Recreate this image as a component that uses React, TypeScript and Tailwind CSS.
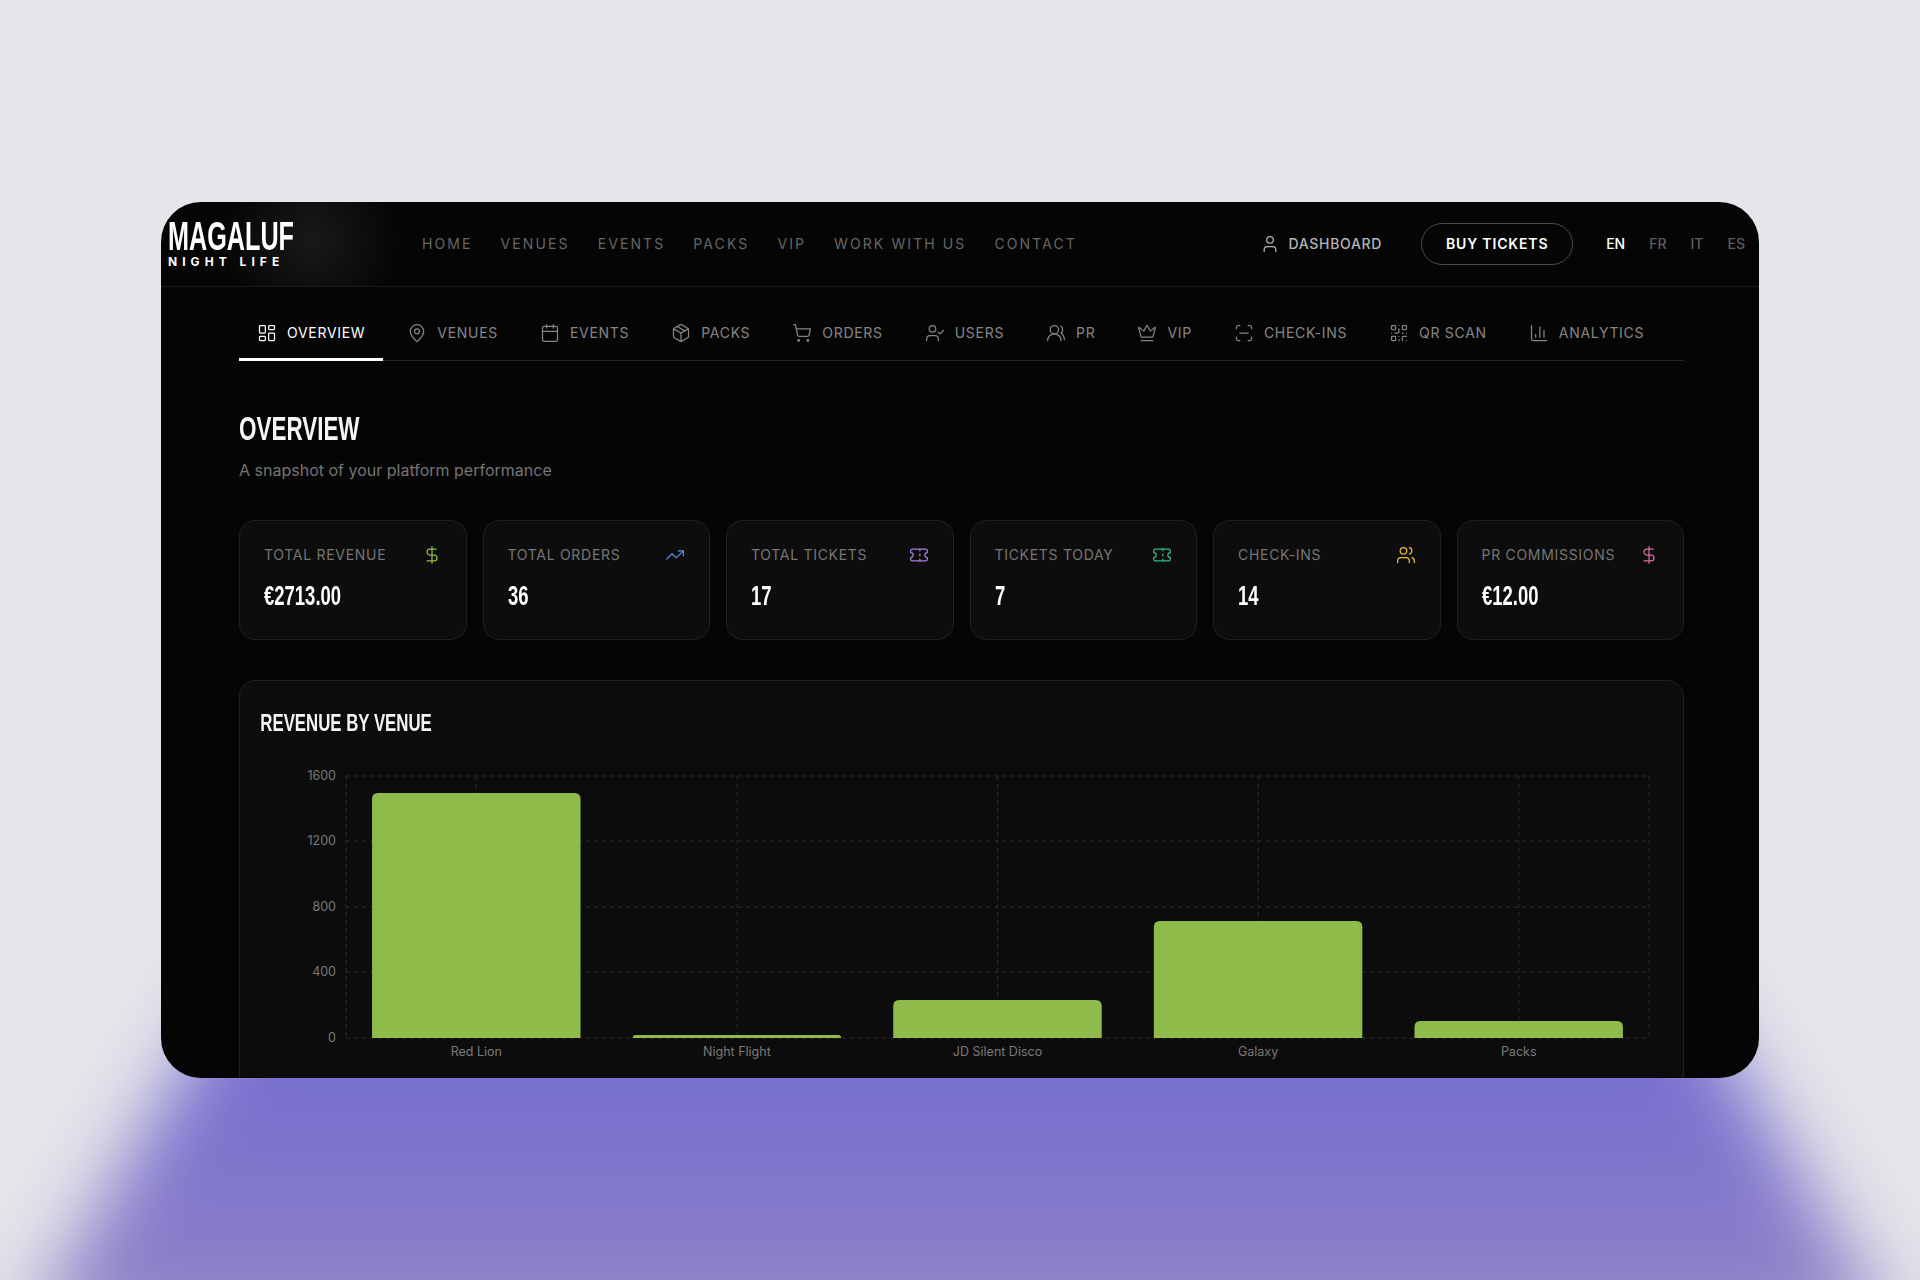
/**
 * Admin overview screen shown as a floating window
 */

import {
  BarChart3,
  Calendar,
  Crown,
  DollarSign,
  LayoutDashboard,
  MapPin,
  Package,
  QrCode,
  ScanLine,
  ShoppingCart,
  Ticket,
  TrendingUp,
  User,
  UserCheck,
  Users,
  UsersRound,
} from 'lucide-react';

const siteLinks = ['Home', 'Venues', 'Events', 'Packs', 'VIP', 'Work with us', 'Contact'];

const tabs = [
  { label: 'Overview', icon: LayoutDashboard, active: true },
  { label: 'Venues', icon: MapPin },
  { label: 'Events', icon: Calendar },
  { label: 'Packs', icon: Package },
  { label: 'Orders', icon: ShoppingCart },
  { label: 'Users', icon: UserCheck },
  { label: 'PR', icon: UsersRound },
  { label: 'VIP', icon: Crown },
  { label: 'Check-ins', icon: ScanLine },
  { label: 'QR Scan', icon: QrCode },
  { label: 'Analytics', icon: BarChart3 },
];

const stats = [
  { label: 'Total Revenue', value: '€2713.00', icon: DollarSign, color: 'text-[#8fbb4b]' },
  { label: 'Total Orders', value: '36', icon: TrendingUp, color: 'text-[#5b8fe6]' },
  { label: 'Total Tickets', value: '17', icon: Ticket, color: 'text-[#a27fe3]' },
  { label: 'Tickets Today', value: '7', icon: Ticket, color: 'text-[#35b98a]' },
  { label: 'Check-ins', value: '14', icon: Users, color: 'text-[#e6b93a]' },
  { label: 'PR Commissions', value: '€12.00', icon: DollarSign, color: 'text-[#d46ea5]' },
];

const venues = [
  { name: 'Red Lion', height: 245 },
  { name: 'Night Flight', height: 3 },
  { name: 'JD Silent Disco', height: 38 },
  { name: 'Galaxy', height: 117 },
  { name: 'Packs', height: 17 },
];

const ticks = [
  { label: '1600', y: 14 },
  { label: '1200', y: 79 },
  { label: '800', y: 145 },
  { label: '400', y: 210 },
  { label: '0', y: 276 },
];

const PLOT_LEFT = 106;
const PLOT_RIGHT = 1409;
const PLOT_BOTTOM = 276;
const BAND = (PLOT_RIGHT - PLOT_LEFT) / venues.length;
const BAR_WIDTH = BAND * 0.8;

function Logo() {
  return (
    <div className="w-[261px] h-full flex flex-col justify-center pl-[7px] bg-[radial-gradient(circle_at_150px_38px,#191919,transparent_90px)]">
      <span className="block origin-left scale-x-[0.63] font-['Liberation_Sans',sans-serif] font-bold text-[40px] leading-[32px] text-white whitespace-nowrap">
        MAGALUF
      </span>
      <span className="block mt-[4px] font-['Inter',sans-serif] font-bold text-[12px] leading-[12px] tracking-[0.42em] text-white whitespace-nowrap">
        NIGHT LIFE
      </span>
    </div>
  );
}

function Header() {
  return (
    <header className="h-[85px] flex items-center pr-[14px] border-b border-[#1a1a1a]">
      <Logo />
      <nav className="flex items-center gap-7">
        {siteLinks.map((link) => (
          <a key={link} className="text-sm uppercase tracking-[0.15em] text-[#666666] whitespace-nowrap">
            {link}
          </a>
        ))}
      </nav>
      <div className="ml-auto flex items-center">
        <a className="flex items-center gap-2 text-sm font-medium uppercase tracking-[0.05em] text-[#b5b5b5]">
          <User size={20} strokeWidth={1.5} />
          Dashboard
        </a>
        <button className="ml-[39px] h-[42px] w-[152px] rounded-full border border-[#4a4a4a] text-sm font-semibold uppercase tracking-[0.06em] text-white">
          Buy Tickets
        </button>
        <div className="ml-[33px] flex items-center gap-[24px] text-sm font-medium">
          <span className="text-white">EN</span>
          <span className="text-[#5c5c5c]">FR</span>
          <span className="text-[#5c5c5c]">IT</span>
          <span className="text-[#5c5c5c]">ES</span>
        </div>
      </div>
    </header>
  );
}

function Tabs() {
  return (
    <div className="mt-[21px] flex gap-1.5 border-b border-[#262626]">
      {tabs.map(({ label, icon: Icon, active }) => (
        <a
          key={label}
          className={`-mb-px flex items-center gap-2.5 px-[18px] h-[53px] border-b-[3px] text-sm uppercase tracking-[0.05em] whitespace-nowrap ${
            active ? 'border-white text-white' : 'border-transparent text-[#858585]'
          }`}
        >
          <Icon size={20} strokeWidth={1.5} />
          {label}
        </a>
      ))}
    </div>
  );
}

function StatCard({ label, value, icon: Icon, color }: (typeof stats)[number]) {
  return (
    <div className="h-[120px] rounded-2xl border border-[#1f1f1f] bg-[#0d0d0d] px-6 pt-6">
      <div className="flex items-center justify-between h-[20px]">
        <span className="text-sm uppercase tracking-[0.05em] text-[#757575] whitespace-nowrap">{label}</span>
        <Icon size={20} strokeWidth={1.5} className={color} />
      </div>
      <div className="mt-[17px] origin-left scale-x-[0.66] font-['Liberation_Sans',sans-serif] font-bold text-[28px] leading-[28px] text-white whitespace-nowrap">
        {value}
      </div>
    </div>
  );
}

function RevenueChart() {
  return (
    <svg viewBox="0 0 1443 330" width={1443} height={330} className="block">
      <g stroke="#2b2b2b" strokeDasharray="4 4" fill="none">
        {ticks.map((tick) => (
          <line key={tick.label} x1={PLOT_LEFT} x2={PLOT_RIGHT} y1={tick.y} y2={tick.y} />
        ))}
        <line x1={PLOT_LEFT} x2={PLOT_LEFT} y1={14} y2={PLOT_BOTTOM} />
        {venues.map((venue, i) => {
          const x = PLOT_LEFT + BAND * (i + 0.5);
          return <line key={venue.name} x1={x} x2={x} y1={14} y2={PLOT_BOTTOM} />;
        })}
        <line x1={PLOT_RIGHT} x2={PLOT_RIGHT} y1={14} y2={PLOT_BOTTOM} />
      </g>
      {ticks.map((tick) => (
        <text key={tick.label} x={96} y={tick.y + 4} textAnchor="end" fontSize={12.5} fill="#7a7a7a">
          {tick.label}
        </text>
      ))}
      {venues.map((venue, i) => {
        const x = PLOT_LEFT + BAND * i + (BAND - BAR_WIDTH) / 2;
        const top = PLOT_BOTTOM - venue.height;
        const r = Math.min(6, venue.height);
        return (
          <g key={venue.name}>
            <path
              d={`M${x} ${PLOT_BOTTOM}V${top + r}Q${x} ${top} ${x + r} ${top}H${x + BAR_WIDTH - r}Q${x + BAR_WIDTH} ${top} ${x + BAR_WIDTH} ${top + r}V${PLOT_BOTTOM}Z`}
              fill="#8fbb4b"
            />
            <text x={x + BAR_WIDTH / 2} y={294} textAnchor="middle" fontSize={12.5} fill="#7a7a7a">
              {venue.name}
            </text>
          </g>
        );
      })}
    </svg>
  );
}

export default function App() {
  return (
    <div className="relative h-[1280px] overflow-hidden bg-[#e5e5ea] pt-[202px] pl-[161px] font-['Inter',sans-serif]">
      {/* purple glow under the window */}
      <div className="absolute inset-0 blur-[38px]">
        <div className="absolute inset-x-0 top-[960px] bottom-[-60px] bg-gradient-to-b from-[#7069d2] via-[#7d74cc] to-[#9585c6] [clip-path:polygon(13%_0,87%_0,99%_100%,1%_100%)]" />
      </div>

      <div className="relative w-[1598px] h-[876px] overflow-hidden rounded-[40px] bg-[#050505]">
        <Header />
        <main className="pl-[78px] pr-[75px]">
          <Tabs />
          <div className="mt-[50px] origin-left scale-x-[0.66] font-['Liberation_Sans',sans-serif] font-bold text-[34px] leading-[34px] text-[#f5f5f5]">
            OVERVIEW
          </div>
          <p className="mt-[13px] text-base leading-6 text-[#757575]">A snapshot of your platform performance</p>
          <div className="mt-[38px] grid grid-cols-6 gap-4">
            {stats.map((stat) => (
              <StatCard key={stat.label} {...stat} />
            ))}
          </div>
          <section className="mt-[40px] rounded-2xl border border-[#1f1f1f] bg-[#0c0c0c]">
            <h2 className="px-[29px] pt-[30px] h-[81px] origin-left scale-x-[0.7] font-['Liberation_Sans',sans-serif] font-bold text-[24px] leading-[24px] text-[#f5f5f5] whitespace-nowrap">
              REVENUE BY VENUE
            </h2>
            <RevenueChart />
          </section>
        </main>
      </div>
    </div>
  );
}
